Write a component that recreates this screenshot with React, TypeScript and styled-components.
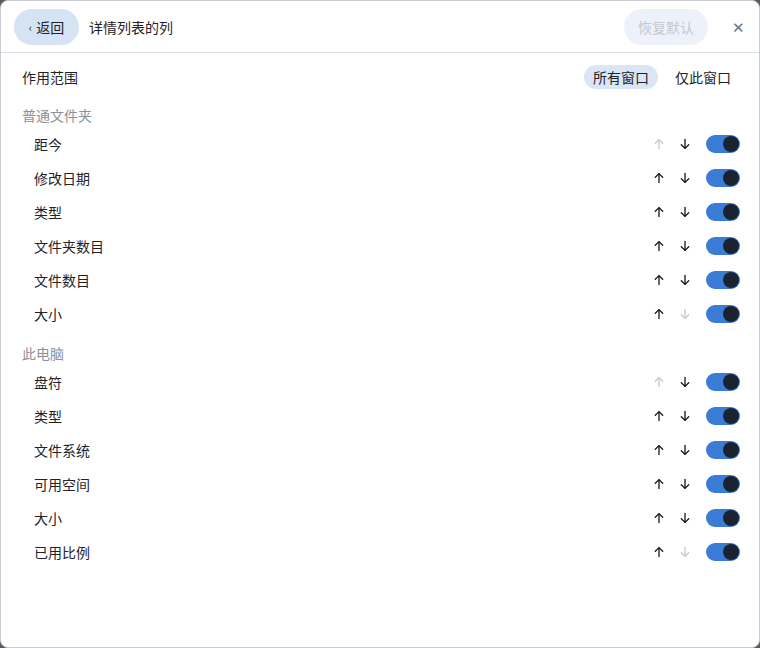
import styled, { createGlobalStyle } from 'styled-components';

const GlobalStyle = createGlobalStyle`
  html, body {
    margin: 0;
    padding: 0;
    background: #5a5a5a;
  }
  body {
    font-family: "Noto Sans CJK SC", "Noto Sans", sans-serif;
    color: #1f2329;
  }
`;

const Window = styled.div`
  width: 758px;
  height: 646px;
  background: #ffffff;
  border: 1px solid #c9cdd3;
  border-radius: 8px;
  overflow: hidden;
  display: flex;
  flex-direction: column;
`;

const Header = styled.div`
  height: 51px;
  display: flex;
  align-items: center;
  padding: 0 11px 0 13px;
  border-bottom: 1px solid #d9dce1;
`;

const BackButton = styled.button`
  height: 36px;
  width: 65px;
  border: none;
  border-radius: 18px;
  background: #d5e3f4;
  color: #1f2329;
  font: inherit;
  font-size: 14px;
  display: flex;
  align-items: center;
  justify-content: center;
  gap: 4px;
  padding: 0;
`;

const Title = styled.div`
  font-size: 14px;
  margin-left: 10px;
  flex: 1;
`;

const ResetButton = styled.button`
  height: 36px;
  width: 84px;
  border: none;
  border-radius: 18px;
  background: #edf2fa;
  color: #c2c9d3;
  font: inherit;
  font-size: 14px;
  padding: 0;
`;

const Close = styled.div`
  width: 20px;
  margin-left: 20px;
  text-align: center;
  font-size: 15px;
  color: #6b717c;
`;

const Content = styled.div`
  padding: 0 19px 0 21px;
`;

const ScopeRow = styled.div`
  height: 48px;
  display: flex;
  align-items: center;
  font-size: 14px;
`;

const ScopeLabel = styled.div`
  flex: 1;
`;

const Segment = styled.div`
  display: flex;
  gap: 8px;
`;

const SegItem = styled.div<{ $active?: boolean }>`
  height: 24px;
  padding: 0 9px;
  border-radius: 12px;
  display: flex;
  align-items: center;
  font-size: 14px;
  background: ${(p) => (p.$active ? '#dbe6f4' : 'transparent')};
`;

const SectionTitle = styled.div<{ $gap: number }>`
  font-size: 14px;
  color: #8b9099;
  height: 24px;
  margin-top: ${(p) => p.$gap}px;
  line-height: 24px;
`;

const Row = styled.div`
  height: 34px;
  display: flex;
  align-items: center;
  padding-left: 12px;
  font-size: 14px;
`;

const RowLabel = styled.div`
  flex: 1;
`;

const ArrowBtn = styled.div<{ $disabled?: boolean }>`
  width: 26px;
  display: flex;
  justify-content: center;
  color: ${(p) => (p.$disabled ? '#c4c8ce' : '#111418')};
`;

const Toggle = styled.div<{ $on: boolean }>`
  width: 34px;
  height: 18px;
  border-radius: 9px;
  margin-left: 8px;
  background: ${(p) => (p.$on ? '#3b7cd6' : '#c8ccd2')};
  display: flex;
  align-items: center;
  justify-content: flex-end;
  padding: 0 1px;
  box-sizing: border-box;
`;

const Knob = styled.div`
  width: 16px;
  height: 16px;
  border-radius: 50%;
  background: #1b2330;
`;

const Arrow = ({ up }: { up?: boolean }) => (
  <svg width="12" height="12" viewBox="0 0 12 12" fill="none" stroke="currentColor" strokeWidth="1.3" strokeLinecap="round" strokeLinejoin="round">
    {up ? (
      <>
        <path d="M6 10.5V1.8" />
        <path d="M2.3 5.3L6 1.6l3.7 3.7" />
      </>
    ) : (
      <>
        <path d="M6 1.5v8.7" />
        <path d="M2.3 6.7L6 10.4l3.7-3.7" />
      </>
    )}
  </svg>
);

type Item = { label: string };

const folder: Item[] = [
  { label: '距今' },
  { label: '修改日期' },
  { label: '类型' },
  { label: '文件夹数目' },
  { label: '文件数目' },
  { label: '大小' },
];

const computer: Item[] = [
  { label: '盘符' },
  { label: '类型' },
  { label: '文件系统' },
  { label: '可用空间' },
  { label: '大小' },
  { label: '已用比例' },
];

const Section = ({ title, items, gap }: { title: string; items: Item[]; gap: number }) => (
  <>
    <SectionTitle $gap={gap}>{title}</SectionTitle>
    {items.map((it, i) => (
      <Row key={it.label + i}>
        <RowLabel>{it.label}</RowLabel>
        <ArrowBtn $disabled={i === 0}>
          <Arrow up />
        </ArrowBtn>
        <ArrowBtn $disabled={i === items.length - 1}>
          <Arrow />
        </ArrowBtn>
        <Toggle $on>
          <Knob />
        </Toggle>
      </Row>
    ))}
  </>
);

export default function App() {
  return (
    <>
      <GlobalStyle />
      <Window>
        <Header>
          <BackButton>
            <span style={{ fontSize: 11 }}>‹</span>返回
          </BackButton>
          <Title>详情列表的列</Title>
          <ResetButton>恢复默认</ResetButton>
          <Close>✕</Close>
        </Header>
        <Content>
          <ScopeRow>
            <ScopeLabel>作用范围</ScopeLabel>
            <Segment>
              <SegItem $active>所有窗口</SegItem>
              <SegItem>仅此窗口</SegItem>
            </Segment>
          </ScopeRow>
          <Section title="普通文件夹" items={folder} gap={2} />
          <Section title="此电脑" items={computer} gap={10} />
        </Content>
      </Window>
    </>
  );
}
